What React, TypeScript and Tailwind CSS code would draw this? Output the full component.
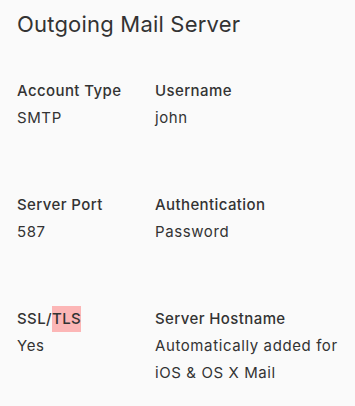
const rows = [
  [
    { label: 'Account Type', value: 'SMTP' },
    { label: 'Username', value: 'john' },
  ],
  [
    { label: 'Server Port', value: '587' },
    { label: 'Authentication', value: 'Password' },
  ],
  [
    { label: 'SSL/TLS', value: 'Yes' },
    { label: 'Server Hostname', value: 'Automatically added for iOS & OS X Mail' },
  ],
]

function Label({ text }: { text: string }) {
  if (text === 'SSL/TLS') {
    return (
      <dt className="font-medium tracking-[0.4px]">
        SSL/<span className="inline-block bg-[#fcb6b6] leading-[26px]">TLS</span>
      </dt>
    )
  }
  return <dt className="font-medium tracking-[0.4px]">{text}</dt>
}

export default function App() {
  return (
    <div className="min-h-[406px] w-[355px] bg-[#fafafa] px-[17px] pt-[9px] font-['Inter',sans-serif] text-[#333333]">
      <h2 className="text-[22px] leading-[30px] tracking-[0.2px]">Outgoing Mail Server</h2>
      <div className="mt-[38px] flex flex-col gap-[60px]">
        {rows.map((row, i) => (
          <dl key={i} className="grid grid-cols-[138px_1fr] text-[15px] leading-[27px]">
            {row.map((item) => (
              <div key={item.label}>
                <Label text={item.label} />
                <dd className="tracking-[0.6px]">{item.value}</dd>
              </div>
            ))}
          </dl>
        ))}
      </div>
    </div>
  )
}
